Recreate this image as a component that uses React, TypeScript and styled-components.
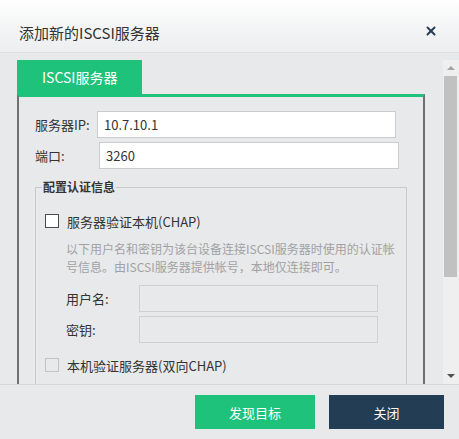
import React, { FC } from 'react';
import styled, { createGlobalStyle } from 'styled-components';
import { X } from 'lucide-react';

const GlobalStyle = createGlobalStyle`
	html, body {
		margin: 0;
		padding: 0;
		background: #e8e9eb;
	}
	body {
		font-family: "Noto Sans CJK SC", "Noto Sans", sans-serif;
		color: #333;
	}
	* {
		box-sizing: border-box;
	}
`;

const Dialog = styled.div`
	width: 459px;
	height: 439px;
	display: flex;
	flex-direction: column;
	background: #e8e9eb;
	overflow: hidden;
`;

const Header = styled.header`
	height: 53px;
	flex-shrink: 0;
	display: flex;
	align-items: flex-start;
	justify-content: space-between;
	padding: 22px 21px 0 19px;
	background: linear-gradient(to bottom, #ffffff 0%, #f3f4f5 55%, #eceef0 100%);
	border-bottom: 1px solid #dcdddf;
`;

const Title = styled.h1`
	margin: 0;
	font-size: 15px;
	font-weight: 400;
	line-height: 22px;
	color: #333;
`;

const CloseIcon = styled.button`
	border: 0;
	background: none;
	padding: 0;
	margin-top: 2px;
	width: 14px;
	height: 14px;
	display: flex;
	color: #2c3e50;
	cursor: pointer;
`;

const Body = styled.div`
	flex: 1;
	display: flex;
	padding-top: 7px;
	min-height: 0;
	border-bottom: 1px solid #d9d6d6;
`;

const ScrollArea = styled.div`
	flex: 1;
	overflow: hidden;
	padding-left: 17px;
	padding-right: 18px;
`;

const Tab = styled.div`
	width: 125px;
	height: 34px;
	padding-left: 25px;
	display: flex;
	align-items: center;
	background: #1ec27a;
	color: #fff;
	font-size: 14px;
`;

const Panel = styled.div`
	border-top: 3px solid #1ec27a;
	border-left: 2px solid #707070;
	border-right: 2px solid #707070;
	padding: 14px 16px 20px 16px;
`;

const FieldRow = styled.div<{ $labelWidth: number; $gap?: number }>`
	display: flex;
	align-items: center;
	margin-top: ${(p) => p.$gap ?? 0}px;

	& > label {
		width: ${(p) => p.$labelWidth}px;
		flex-shrink: 0;
		font-size: 13px;
		color: #333;
	}
`;

const TextInput = styled.input<{ $width: number }>`
	width: ${(p) => p.$width}px;
	height: 27px;
	border: 1px solid #cccccc;
	background: #fff;
	padding: 0 6px;
	font-family: inherit;
	font-size: 13px;
	color: #333;
	outline: none;

	&:disabled {
		background: #e8e9eb;
		border-color: #cfd0d2;
	}
`;

const AuthSet = styled.fieldset`
	margin: 9px 0 0 0;
	padding: 0 0 40px 9px;
	border: 1px solid #c9c9cb;
`;

const Legend = styled.legend`
	padding: 0 1px;
	margin-left: -3px;
	font-size: 12px;
	font-weight: 700;
	line-height: 18px;
	color: #333;
`;

const CheckRow = styled.label<{ $gap: number }>`
	display: flex;
	align-items: center;
	height: 20px;
	margin-top: ${(p) => p.$gap}px;
	font-size: 13px;
	color: #333;
`;

const Box = styled.span<{ $disabled?: boolean }>`
	width: 14px;
	height: 14px;
	flex-shrink: 0;
	margin-right: 8px;
	border: 1px solid ${(p) => (p.$disabled ? '#c4c4c6' : '#4a4a4a')};
	background: ${(p) => (p.$disabled ? '#e8e9eb' : '#fff')};
`;

const Indented = styled.div`
	padding-left: 21px;
`;

const Note = styled.p`
	margin: 9px 0 0 0;
	width: 334px;
	font-size: 12px;
	line-height: 18px;
	color: #a2a2a4;
`;

const ScrollBar = styled.div`
	width: 16px;
	flex-shrink: 0;
	display: flex;
	flex-direction: column;
	background: #efefef;
`;

const ScrollButton = styled.div<{ $down?: boolean; $dim?: boolean }>`
	height: 16px;
	display: flex;
	align-items: center;
	justify-content: center;

	&::before {
		content: '';
		width: 0;
		height: 0;
		border-left: 4px solid transparent;
		border-right: 4px solid transparent;
		${(p) =>
			p.$down
				? `border-top: 4px solid ${p.$dim ? '#a3a3a3' : '#505050'};`
				: `border-bottom: 4px solid ${p.$dim ? '#a3a3a3' : '#505050'};`}
	}
`;

const Thumb = styled.div`
	height: 201px;
	margin: 0 2px 0 1px;
	background: #c1c1c1;
`;

const Track = styled.div`
	flex: 1;
`;

const Footer = styled.footer`
	height: 54px;
	flex-shrink: 0;
	display: flex;
	align-items: center;
	justify-content: flex-end;
	gap: 14px;
	padding: 0 15px 0 0;
`;

const Button = styled.button<{ $tone: 'green' | 'navy'; $width: number }>`
	width: ${(p) => p.$width}px;
	height: 34px;
	border: 0;
	background: ${(p) => (p.$tone === 'green' ? '#1ec27a' : '#233d55')};
	color: #fff;
	font-family: inherit;
	font-size: 13px;
	cursor: pointer;
`;

const App: FC = () => {
	return (
		<>
			<GlobalStyle />
			<Dialog>
				<Header>
					<Title>添加新的ISCSI服务器</Title>
					<CloseIcon aria-label='关闭'>
						<X size={14} strokeWidth={3.4} />
					</CloseIcon>
				</Header>

				<Body>
					<ScrollArea>
						<Tab>ISCSI服务器</Tab>
						<Panel>
							<FieldRow $labelWidth={62}>
								<label>服务器IP:</label>
								<TextInput $width={299} defaultValue='10.7.10.1' />
							</FieldRow>
							<FieldRow $labelWidth={64} $gap={4}>
								<label>端口:</label>
								<TextInput $width={300} defaultValue='3260' />
							</FieldRow>

							<AuthSet>
								<Legend>配置认证信息</Legend>
								<CheckRow $gap={15}>
									<Box />
									服务器验证本机(CHAP)
								</CheckRow>
								<Indented>
									<Note>
										以下用户名和密钥为该台设备连接ISCSI服务器时使用的认证帐号信息。由ISCSI服务器提供帐号，本地仅连接即可。
									</Note>
									<FieldRow $labelWidth={73} $gap={9}>
										<label>用户名:</label>
										<TextInput $width={239} disabled />
									</FieldRow>
									<FieldRow $labelWidth={73} $gap={4}>
										<label>密钥:</label>
										<TextInput $width={239} disabled />
									</FieldRow>
								</Indented>
								<CheckRow $gap={12}>
									<Box $disabled />
									本机验证服务器(双向CHAP)
								</CheckRow>
							</AuthSet>
						</Panel>
					</ScrollArea>

					<ScrollBar>
						<ScrollButton $dim />
						<Thumb />
						<Track />
						<ScrollButton $down />
					</ScrollBar>
				</Body>

				<Footer>
					<Button $tone='green' $width={120}>
						发现目标
					</Button>
					<Button $tone='navy' $width={115}>
						关闭
					</Button>
				</Footer>
			</Dialog>
		</>
	);
};

export default App;
